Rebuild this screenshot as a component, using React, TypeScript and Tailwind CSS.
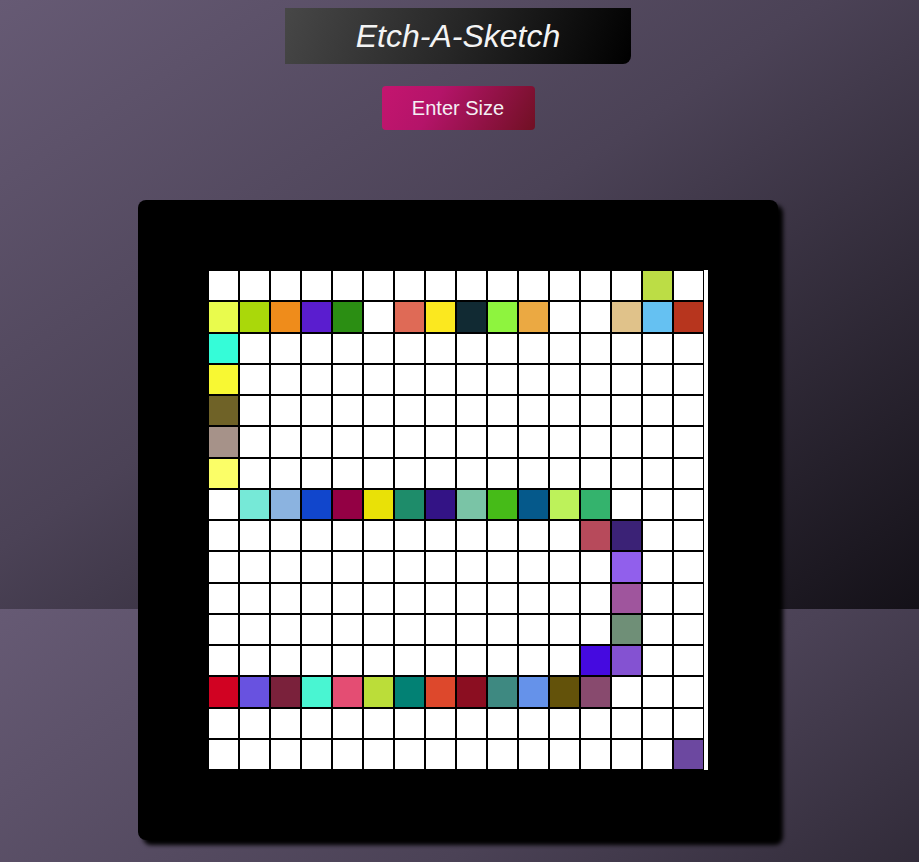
import React from "react";

const W = "#ffffff";

// 16x16 board, cells listed row by row (only coloured ones are set)
const painted: Record<string, string> = {
  "0-14": "#bcdd45",
  "1-0": "#e9fb4d",
  "1-1": "#aad80a",
  "1-2": "#ef8c1b",
  "1-3": "#5a1dcf",
  "1-4": "#2b8e13",
  "1-6": "#df6a56",
  "1-7": "#fbe81f",
  "1-8": "#112a33",
  "1-9": "#8ef43e",
  "1-10": "#eba942",
  "1-13": "#e0c28a",
  "1-14": "#65c1f2",
  "1-15": "#b7351e",
  "2-0": "#35fcd8",
  "3-0": "#f8f833",
  "4-0": "#6f6227",
  "5-0": "#a69289",
  "6-0": "#fbfe67",
  "7-1": "#76e9d7",
  "7-2": "#8bb3e0",
  "7-3": "#1146cc",
  "7-4": "#930044",
  "7-5": "#e9e107",
  "7-6": "#1e8c6a",
  "7-7": "#331385",
  "7-8": "#7ac4a6",
  "7-9": "#46bb18",
  "7-10": "#05598b",
  "7-11": "#bdf25a",
  "7-12": "#34b36d",
  "8-12": "#b74a5b",
  "8-13": "#3b2276",
  "9-13": "#915fec",
  "10-13": "#9f559d",
  "11-13": "#6f8f77",
  "12-12": "#450ae0",
  "12-13": "#8452d2",
  "13-0": "#d10222",
  "13-1": "#6852e0",
  "13-2": "#7a213b",
  "13-3": "#49f5d2",
  "13-4": "#e44d73",
  "13-5": "#bbdd39",
  "13-6": "#028174",
  "13-7": "#dd482c",
  "13-8": "#8b0e21",
  "13-9": "#3e8981",
  "13-10": "#6592ea",
  "13-11": "#63520a",
  "13-12": "#884a6e",
  "15-15": "#6c48a0",
};

const SIZE = 16;

function Board() {
  const cells = [];
  for (let r = 0; r < SIZE; r++) {
    for (let c = 0; c < SIZE; c++) {
      const color = painted[`${r}-${c}`] ?? W;
      cells.push(
        <div
          key={`${r}-${c}`}
          className="w-[31px] h-[31.25px] border border-black"
          style={{ backgroundColor: color }}
        />
      );
    }
  }
  return (
    <div className="w-[500px] h-[500px] bg-white flex flex-wrap content-start">
      {cells}
    </div>
  );
}

export default function App() {
  return (
    <div
      className="min-h-[862px] w-full pr-[3px] flex flex-col items-center bg-[linear-gradient(to_bottom_right,#665a74,#4b4256_45%,#141118)] bg-[length:100%_609px] bg-repeat"
      style={{ fontFamily: '"Liberation Sans", Arial, sans-serif' }}
    >
      {/* Title */}
      <h1 className="mt-2 w-[346px] h-[56px] flex items-center justify-center bg-[linear-gradient(110deg,#474747,#262626_50%,#000000)] rounded-br-lg text-[32px] italic text-[#f4f4f4]">
        Etch-A-Sketch
      </h1>

      {/* Size button */}
      <button className="mt-[22px] w-[153px] h-[44px] rounded bg-[linear-gradient(120deg,#c4156f,#b41469_35%,#701023)] text-[20px] text-[#f4f0f4]">
        Enter Size
      </button>

      {/* Frame */}
      <div className="mt-[70px] w-[640px] h-[640px] p-[70px] bg-black rounded-lg shadow-[5px_5px_4px_#000]">
        <Board />
      </div>
    </div>
  );
}
